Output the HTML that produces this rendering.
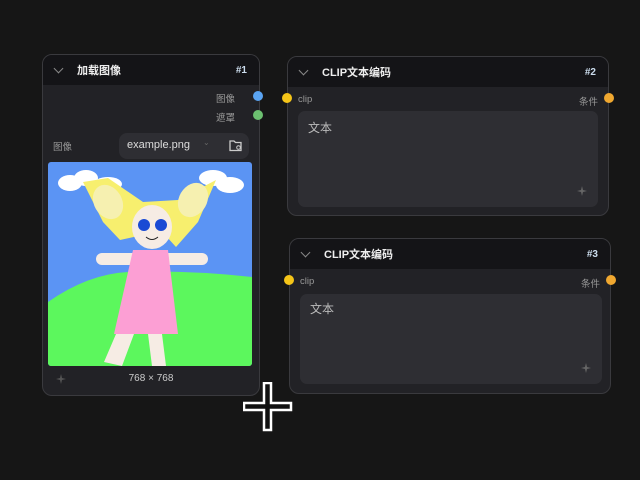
<!DOCTYPE html><html><head><meta charset="utf-8"><style>
*{margin:0;padding:0;box-sizing:border-box}
body{width:640px;height:480px;background:#161616;font-family:"Liberation Sans","Noto Sans CJK SC",sans-serif;position:relative;overflow:hidden;color:#ddd}
.node{position:absolute;background:#222226;border:1px solid #3a3a3e;border-radius:10px;overflow:hidden}
.hd{height:30px;background:#141417;display:flex;align-items:center;font-size:11px;font-weight:bold;color:#eee;position:relative}
.chev{position:absolute;left:12px;top:10px;width:7px;height:7px;border-right:1.5px solid #888;border-bottom:1.5px solid #888;transform:rotate(45deg)}
.id{position:absolute;right:12px;font-size:10px;color:#cde}
.lbl{position:absolute;font-size:9.5px;color:#999}
.dot{position:absolute;width:10px;height:10px;border-radius:50%}
.ta{position:absolute;background:#2e2e33;border-radius:7px}
</style></head><body>
<div class="node" style="left:42px;top:54px;width:218px;height:342px">
 <div class="hd"><div class="chev"></div><span style="margin-left:34px">加载图像</span><span class="id">#1</span></div>
 <div class="lbl" style="right:24px;top:36px">图像</div>
 <div class="lbl" style="right:24px;top:55px">遮罩</div>
 <div class="lbl" style="left:10px;top:84px">图像</div>
 <div style="position:absolute;left:76px;top:78px;width:130px;height:26px;background:#2e2e33;border-radius:8px;font-size:11px;color:#ddd;padding:6px 0 0 8px">example.png<span style="position:absolute;left:84px;top:5px;color:#666;font-size:8px">⌄</span>
 <svg style="position:absolute;right:6px;top:6px" width="14" height="13" viewBox="0 0 14 13"><path d="M1 2h4l1.5 1.5H12v8H1z" fill="none" stroke="#ccc" stroke-width="1.3"/><circle cx="9.5" cy="8.5" r="1.8" fill="none" stroke="#ccc" stroke-width="1"/></svg></div>
 <svg style="position:absolute;left:5px;top:107px;border-radius:3px" width="204" height="204" viewBox="0 0 204 204">
  <rect width="204" height="204" fill="#5b94f4"/>
  <path d="M0 140 Q40 112 80 110 Q140 108 204 115 L204 204 L0 204Z" fill="#5cf75d"/>
  <g fill="#fff"><ellipse cx="22" cy="21" rx="12" ry="8"/><ellipse cx="38" cy="16" rx="12" ry="8"/><ellipse cx="60" cy="22" rx="14" ry="7"/><ellipse cx="165" cy="16" rx="14" ry="8"/><ellipse cx="182" cy="23" rx="14" ry="8"/></g>
  <path d="M35 20 L60 16 L95 40 L130 38 L168 18 L150 60 L128 85 L118 74 L90 74 L72 78 L55 60Z" fill="#f7ef6e"/>
  <ellipse cx="60" cy="40" rx="14" ry="18" transform="rotate(-30 60 40)" fill="#f6f0b0"/><ellipse cx="145" cy="38" rx="14" ry="18" transform="rotate(30 145 38)" fill="#f6f0b0"/>
  <ellipse cx="104" cy="65" rx="20" ry="22" fill="#f6ece4"/>
  <circle cx="96" cy="63" r="6" fill="#1a4ad4"/><circle cx="113" cy="63" r="6" fill="#1a4ad4"/>
  <path d="M98 75 Q104 80 110 75" stroke="#222" fill="none"/>
  <rect x="48" y="91" width="112" height="12" rx="6" fill="#f6ece4"/>
  <path d="M85 88 L120 88 L130 172 L66 172Z" fill="#fc9fd4"/>
  <path d="M68 172 L86 172 L74 204 L56 200Z M100 172 L114 172 L118 204 L104 204Z" fill="#f6ece4"/>
 </svg>
 <svg style="position:absolute;left:12px;top:318px" width="12" height="12"><path d="M6 1 L7 5 L11 6 L7 7 L6 11 L5 7 L1 6 L5 5Z" fill="#555"/></svg>
 <div style="position:absolute;left:0;width:216px;top:318px;text-align:center;font-size:10px;color:#ccc">768 × 768</div>
</div>
<div class="dot" style="left:253px;top:91px;background:#5aa4f2"></div>
<div class="dot" style="left:253px;top:110px;background:#6cc070"></div>

<div class="node" style="left:287px;top:56px;width:322px;height:160px">
 <div class="hd"><div class="chev"></div><span style="margin-left:34px">CLIP文本编码</span><span class="id">#2</span></div>
 <div class="lbl" style="left:10px;top:37px">clip</div>
 <div class="lbl" style="right:10px;top:37px">条件</div>
 <div class="ta" style="left:10px;top:54px;width:300px;height:96px"><span style="position:absolute;left:10px;top:8px;font-size:12px;color:#bbb">文本</span>
 <svg style="position:absolute;right:10px;bottom:10px" width="12" height="12"><path d="M6 1 L7 5 L11 6 L7 7 L6 11 L5 7 L1 6 L5 5Z" fill="#666"/></svg></div>
</div>
<div class="dot" style="left:282px;top:93px;background:#f5c518"></div>
<div class="dot" style="left:604px;top:93px;background:#f0a830"></div>

<div class="node" style="left:289px;top:238px;width:322px;height:156px">
 <div class="hd"><div class="chev"></div><span style="margin-left:34px">CLIP文本编码</span><span class="id">#3</span></div>
 <div class="lbl" style="left:10px;top:37px">clip</div>
 <div class="lbl" style="right:10px;top:37px">条件</div>
 <div class="ta" style="left:10px;top:55px;width:302px;height:90px"><span style="position:absolute;left:10px;top:6px;font-size:12px;color:#bbb">文本</span>
 <svg style="position:absolute;right:10px;bottom:10px" width="12" height="12"><path d="M6 1 L7 5 L11 6 L7 7 L6 11 L5 7 L1 6 L5 5Z" fill="#666"/></svg></div>
</div>
<div class="dot" style="left:284px;top:275px;background:#f5c518"></div>
<div class="dot" style="left:606px;top:275px;background:#f0a830"></div>

<svg style="position:absolute;left:243px;top:382px" width="50" height="50"><path d="M21 1H28V21H48V28H28V48H21V28H1V21H21Z" fill="#111" stroke="#fff" stroke-width="2.5"/></svg>
</body></html>
